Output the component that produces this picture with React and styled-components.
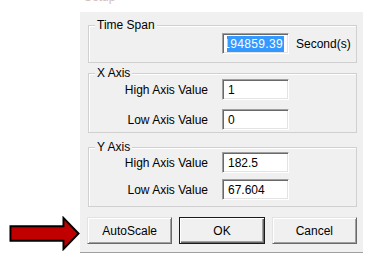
import React from 'react';
import styled, { createGlobalStyle } from 'styled-components';

const GlobalStyle = createGlobalStyle`
  html, body {
    margin: 0;
    padding: 0;
    background: #ffffff;
  }
  body {
    font-family: "Liberation Sans", Arial, sans-serif;
    font-size: 12px;
    color: #000000;
  }
`;

const Page = styled.div`
  width: 377px;
  height: 279px;
  display: flex;
  flex-direction: column;
  overflow: hidden;
`;

const TopCaption = styled.div`
  height: 4px;
  margin-left: 84px;
  overflow: hidden;
  color: #d4bcbc;
  font-size: 12px;
  line-height: 12px;

  span {
    display: block;
    margin-top: -9px;
  }
`;

const Body = styled.div`
  display: flex;
  margin-top: 8px;
`;

const ArrowColumn = styled.div`
  width: 80px;
  box-sizing: border-box;
  padding-left: 9px;
  padding-bottom: 2px;
  display: flex;
  align-items: flex-end;
`;

const Dialog = styled.div`
  width: 283px;
  height: 241px;
  box-sizing: border-box;
  background: #f0f0f0;
  border-bottom: 1px solid #a0a0a0;
  padding: 13px 6px 0 8px;
  display: flex;
  flex-direction: column;
`;

const Group = styled.div`
  position: relative;
  border: 1px solid #d0d0d0;
  box-shadow: inset 1px 1px 0 #ffffff;
  padding: ${(p) => p.$pad};
  margin-bottom: ${(p) => p.$after}px;
  display: flex;
  flex-direction: column;
  gap: ${(p) => p.$gap}px;
`;

const Legend = styled.div`
  position: absolute;
  top: -8px;
  left: 6px;
  padding: 0 2px;
  background: #f0f0f0;
  line-height: 15px;
`;

const Row = styled.div`
  display: flex;
  align-items: center;
`;

const Label = styled.div`
  width: 119px;
  margin-right: 14px;
  text-align: right;
  white-space: nowrap;
`;

const Field = styled.div`
  width: 67px;
  height: 21px;
  box-sizing: border-box;
  background: #ffffff;
  border: 1px solid;
  border-color: #a0a0a0 #ffffff #ffffff #a0a0a0;
  box-shadow: inset 1px 1px 0 #696969, inset -1px -1px 0 #e3e3e3;
  padding: ${(p) => (p.$selected ? '2px 4px 0 4px' : '0 4px 0 5px')};
  display: flex;
  align-items: center;
  line-height: 16px;
`;

const Clip = styled.div`
  flex: 1;
  overflow: hidden;
  display: flex;
  justify-content: flex-end;
  margin-top: -2px;
`;

const Selection = styled.span`
  background: #3399ff;
  color: #ffffff;
  white-space: nowrap;
  letter-spacing: 0.35px;
  line-height: 16px;
  border-right: 1px solid #c8782c;
`;

const Unit = styled.div`
  margin-left: 7px;
  white-space: nowrap;
`;

const Buttons = styled.div`
  display: flex;
  gap: 7px;
  margin-left: -1px;
`;

const Button = styled.button`
  width: ${(p) => p.$w}px;
  height: 27px;
  box-sizing: border-box;
  padding: 0;
  font-family: "Liberation Sans", Arial, sans-serif;
  font-size: 12px;
  color: #000000;
  background: #f0f0f0;
  border: 1px solid;
  border-color: ${(p) => (p.$default ? '#1a1a1a' : '#e3e3e3 #696969 #696969 #e3e3e3')};
  box-shadow: ${(p) =>
    p.$default
      ? 'inset 1px 1px 0 #ffffff, inset -1px -1px 0 #696969, inset -2px -2px 0 #a0a0a0'
      : 'inset 1px 1px 0 #ffffff, inset -1px -1px 0 #a0a0a0'};
`;

const Arrow = () => (
  <svg width="73" height="35" viewBox="0 0 73 35">
    <polygon
      points="1.5,10 56,10 56,1.5 71.5,17.5 56,33.5 56,25 1.5,25"
      fill="#c00000"
      stroke="#000000"
      strokeWidth="2"
      strokeLinejoin="miter"
    />
  </svg>
);

export default function App() {
  return (
    <Page>
      <GlobalStyle />
      <TopCaption>
        <span>Setup</span>
      </TopCaption>
      <Body>
        <ArrowColumn>
          <Arrow />
        </ArrowColumn>
        <Dialog>
          <Group $pad="7px 0 8px 0" $gap={0} $after={10}>
            <Legend>Time Span</Legend>
            <Row>
              <Label />
              <Field $selected>
                <Clip>
                  <Selection>194859.39</Selection>
                </Clip>
              </Field>
              <Unit>Second(s)</Unit>
            </Row>
          </Group>

          <Group $pad="5px 0 2px 0" $gap={9} $after={14}>
            <Legend>X Axis</Legend>
            <Row>
              <Label>High Axis Value</Label>
              <Field>1</Field>
            </Row>
            <Row>
              <Label>Low Axis Value</Label>
              <Field>0</Field>
            </Row>
          </Group>

          <Group $pad="4px 0 6px 0" $gap={6} $after={10}>
            <Legend>Y Axis</Legend>
            <Row>
              <Label>High Axis Value</Label>
              <Field>182.5</Field>
            </Row>
            <Row>
              <Label>Low Axis Value</Label>
              <Field>67.604</Field>
            </Row>
          </Group>

          <Buttons>
            <Button $w={86}>AutoScale</Button>
            <Button $w={86} $default>OK</Button>
            <Button $w={86}>Cancel</Button>
          </Buttons>
        </Dialog>
      </Body>
    </Page>
  );
}
